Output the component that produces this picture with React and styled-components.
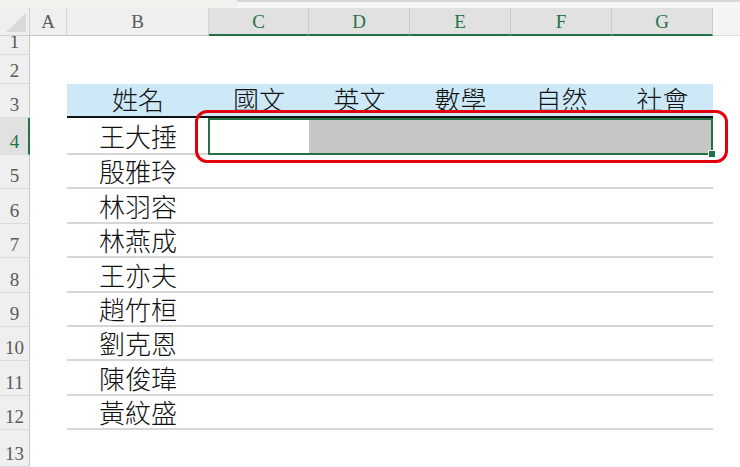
import React from "react";
import styled, { createGlobalStyle, css } from "styled-components";

const Global = createGlobalStyle`
  html, body { margin: 0; padding: 0; background: #ffffff; }
  body { width: 740px; height: 467px; overflow: hidden; }
  #root { width: 740px; height: 467px; }
`;

const GREEN = "#217346";

const Page = styled.div`
  width: 740px;
  height: 467px;
  display: flex;
  flex-direction: column;
  overflow: hidden;
  background: #ffffff;
`;

const TopStrip = styled.div`
  height: 8px;
  display: flex;
  background: #f2f1ee;
`;

const TopLeft = styled.div`
  width: 237px;
`;

const FormulaEdge = styled.div`
  flex: 1;
  border-top: 2px solid #d6d6d6;
  background: #f6f6f5;
`;

const Sheet = styled.div`
  flex: 1;
  position: relative;
  display: grid;
  grid-template-columns: 30px 37px 142px 100px 101px 101px 101px 101px 1fr;
  grid-template-rows: 28px 19px 29px 34px 37px 34px 35px 34px 35px 34px 34px 35px 34px 1fr;
`;

const Corner = styled.div`
  position: relative;
  background: #efefef;
  border-right: 1px solid #cfcfcf;
  border-bottom: 1px solid #cfcfcf;
  &::after {
    content: "";
    position: absolute;
    right: 3px;
    bottom: 3px;
    width: 20px;
    height: 19px;
    background: #d9d9d9;
    clip-path: polygon(100% 0, 100% 100%, 0 100%);
  }
`;

const ColHead = styled.div`
  box-sizing: border-box;
  display: flex;
  align-items: flex-end;
  justify-content: center;
  padding-bottom: 4px;
  font-family: "Liberation Serif", "Times New Roman", serif;
  font-size: 19px;
  line-height: 1;
  color: #5a5a5a;
  background: #efefef;
  border-right: 1px solid #d4d4d4;
  border-bottom: 1px solid #c6c6c6;
  ${(p) =>
    p.$selected &&
    css`
      background: #e1e1e1;
      color: ${GREEN};
      border-right-color: #c9c9c9;
      border-bottom: 2px solid ${GREEN};
      padding-bottom: 3px;
    `}
`;

const ColFiller = styled.div`
  background: #f4f4f4;
  border-bottom: 1px solid #dcdcdc;
`;

const RowHead = styled.div`
  box-sizing: border-box;
  display: flex;
  align-items: flex-end;
  justify-content: center;
  padding-bottom: 3px;
  font-family: "Liberation Serif", "Times New Roman", serif;
  font-size: 19px;
  line-height: 1;
  color: #5a5a5a;
  background: #efefef;
  border-right: 1px solid #c6c6c6;
  border-bottom: 1px solid #dadada;
  ${(p) =>
    p.$selected &&
    css`
      background: #e1e1e1;
      color: ${GREEN};
      border-right: 2px solid ${GREEN};
      padding-left: 1px;
    `}
`;

const Cell = styled.div`
  box-sizing: border-box;
  display: flex;
  align-items: center;
  justify-content: center;
  white-space: nowrap;
  font-family: "Noto Sans CJK TC", "Noto Sans CJK SC", sans-serif;
  font-size: 26px;
  font-weight: 300;
  line-height: 1;
  color: #111111;
  ${(p) =>
    p.$line &&
    css`
      border-bottom: 2px solid #d6d6d6;
    `}
  ${(p) =>
    p.$head &&
    css`
      align-items: flex-end;
      padding-bottom: 4px;
      background: #cde9f8;
      border-bottom: 2px solid #111111;
    `}
`;

const Selection = styled.div`
  grid-column: span 5;
  position: relative;
  box-sizing: border-box;
  display: grid;
  grid-template-columns: 99px 1fr;
  border: 2px solid ${GREEN};
  margin-left: -1px;
`;

const ActiveCell = styled.div`
  background: #ffffff;
`;

const RangeFill = styled.div`
  background: #c6c6c6;
`;

const FillHandle = styled.div`
  position: absolute;
  right: -5px;
  bottom: -5px;
  width: 6px;
  height: 6px;
  background: ${GREEN};
  border: 1px solid #ffffff;
`;

const Annotation = styled.div`
  position: absolute;
  left: 195px;
  top: 102px;
  width: 533px;
  height: 53px;
  box-sizing: border-box;
  border: 3.5px solid #e3000b;
  border-radius: 12px;
  pointer-events: none;
`;

const cols = ["A", "B", "C", "D", "E", "F", "G"];
const headers = ["姓名", "國文", "英文", "數學", "自然", "社會"];
const names = ["王大捶", "殷雅玲", "林羽容", "林燕成", "王亦夫", "趙竹桓", "劉克恩", "陳俊瑋", "黃紋盛"];

export default function App() {
  const rows = [];
  for (let r = 1; r <= 13; r++) {
    const cells = [];
    cells.push(
      <RowHead key="h" $selected={r === 4}>
        {r}
      </RowHead>
    );
    cells.push(<Cell key="A" />);
    if (r === 3) {
      headers.forEach((h, i) => (
        cells.push(
          <Cell key={"c" + i} $head>
            {h}
          </Cell>
        )
      ));
    } else if (r === 4) {
      cells.push(
        <Cell key="B" $line>
          {names[0]}
        </Cell>
      );
      cells.push(
        <Selection key="sel">
          <ActiveCell />
          <RangeFill />
          <FillHandle />
        </Selection>
      );
    } else if (r >= 5 && r <= 12) {
      cells.push(
        <Cell key="B" $line>
          {names[r - 4]}
        </Cell>
      );
      for (let c = 0; c < 5; c++) cells.push(<Cell key={"d" + c} $line />);
    } else {
      for (let c = 0; c < 6; c++) cells.push(<Cell key={"e" + c} />);
    }
    cells.push(<Cell key="f" />);
    rows.push(<React.Fragment key={r}>{cells}</React.Fragment>);
  }

  return (
    <Page>
      <Global />
      <TopStrip>
        <TopLeft />
        <FormulaEdge />
      </TopStrip>
      <Sheet>
        <Corner />
        {cols.map((c, i) => (
          <ColHead key={c} $selected={i >= 2}>
            {c}
          </ColHead>
        ))}
        <ColFiller />
        {rows}
        <Annotation />
      </Sheet>
    </Page>
  );
}
